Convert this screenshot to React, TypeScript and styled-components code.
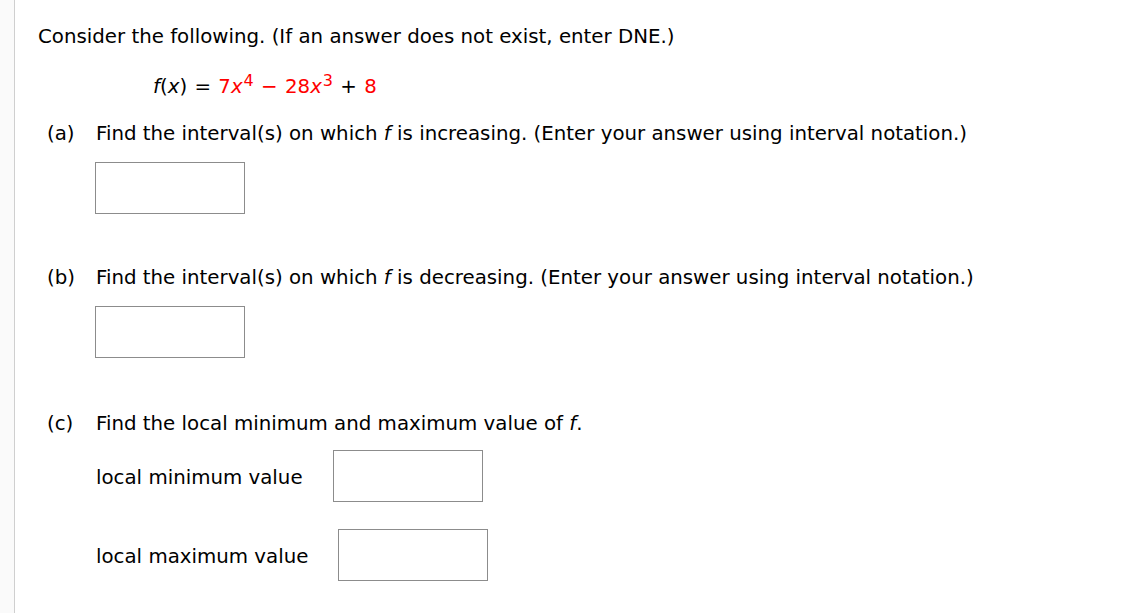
import React from "react";
import styled, { createGlobalStyle } from "styled-components";

const Global = createGlobalStyle`
  html, body { margin: 0; padding: 0; background: #ffffff; }
  body { font-family: Verdana, "DejaVu Sans", sans-serif; font-size: 19.8px; color: #000; }
`;

const Page = styled.div`
  display: flex;
  min-height: 613px;
`;

const Gutter = styled.div`
  width: 14px;
  flex: 0 0 14px;
  background: #fafafa;
  border-right: 1px solid #cfcfcf;
`;

const Content = styled.div`
  flex: 1;
  padding: 25px 0 0 23px;
  line-height: 24px;
`;

const Intro = styled.p`
  margin: 0;
`;

const Formula = styled.div`
  margin: 26px 0 0 115px;
`;

const Red = styled.span`
  color: #ff0000;
`;

const I = styled.i`
  font-style: italic;
`;

const Sup = styled.sup`
  font-size: 16px;
  line-height: 0;
  vertical-align: 7px;
  padding-left: 1px;
`;

const Op = styled.span`
  padding: 0 1px;
`;

const Part = styled.section<{ $top: number }>`
  margin-top: ${(p) => p.$top}px;
  display: grid;
  grid-template-columns: 49px 1fr;
  padding-left: 9px;
`;

const Label = styled.span``;

const Body = styled.div`
  display: flex;
  flex-direction: column;
`;

const AnswerBox = styled.div`
  flex: 0 0 auto;
  width: 148px;
  height: 50px;
  border: 1px solid #8c8c8c;
  background: #fff;
  margin-left: -1px;
`;

const Question = styled.div``;

const BoxWrap = styled.div`
  margin-top: 16px;
`;

const ValueRow = styled.div<{ $top: number }>`
  display: flex;
  align-items: center;
  gap: 31px;
  margin-top: ${(p) => p.$top}px;
`;

const ValueLabel = styled.span`
  padding-top: 4px;
`;

export default function App() {
  return (
    <>
      <Global />
      <Page>
        <Gutter />
        <Content>
          <Intro>Consider the following. (If an answer does not exist, enter DNE.)</Intro>
          <Formula>
            <I>f</I>(<I>x</I>) <Op>=</Op> <Red>7<I>x</I><Sup>4</Sup> <Op>−</Op> 28<I>x</I><Sup>3</Sup></Red> <Op>+</Op> <Red>8</Red>
          </Formula>
          <Part $top={23}>
            <Label>(a)</Label>
            <Body>
              <Question>
                Find the interval(s) on which <I>f</I> is increasing. (Enter your answer using interval notation.)
              </Question>
              <BoxWrap>
                <AnswerBox />
              </BoxWrap>
            </Body>
          </Part>
          <Part $top={52}>
            <Label>(b)</Label>
            <Body>
              <Question>
                Find the interval(s) on which <I>f</I> is decreasing. (Enter your answer using interval notation.)
              </Question>
              <BoxWrap>
                <AnswerBox />
              </BoxWrap>
            </Body>
          </Part>
          <Part $top={54}>
            <Label>(c)</Label>
            <Body>
              <Question>
                Find the local minimum and maximum value of <I>f</I>.
              </Question>
              <ValueRow $top={14}>
                <ValueLabel>local minimum value</ValueLabel>
                <AnswerBox />
              </ValueRow>
              <ValueRow $top={27}>
                <ValueLabel>local maximum value</ValueLabel>
                <AnswerBox />
              </ValueRow>
            </Body>
          </Part>
        </Content>
      </Page>
    </>
  );
}
